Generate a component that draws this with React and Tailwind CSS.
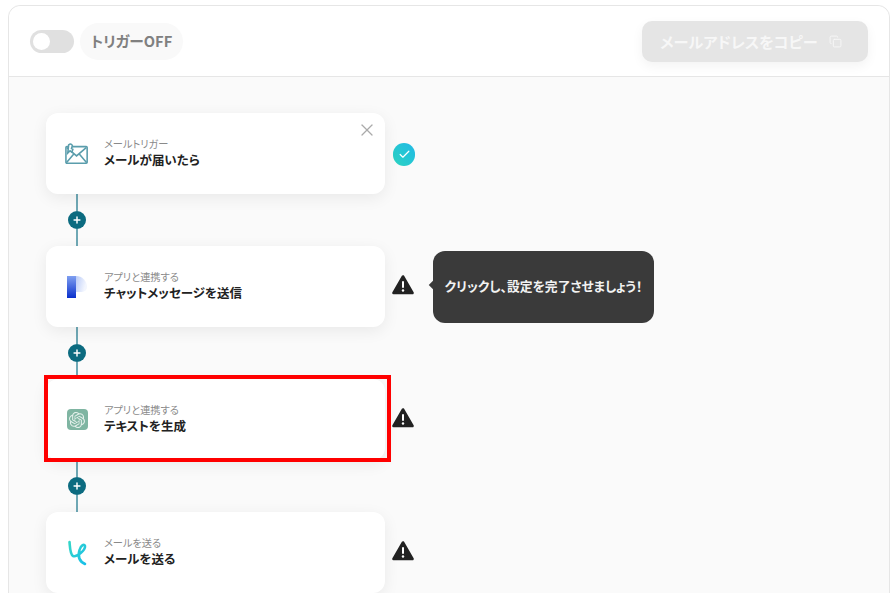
import { Copy, X, Plus, Check } from 'lucide-react'
import { SiOpenai } from 'react-icons/si'

const fontFamily = "font-['Noto_Sans_CJK_JP','Noto_Sans',sans-serif]"

function MailIcon() {
  return (
    <svg width="26" height="24" viewBox="0 0 26 24" fill="none" stroke="#5a9dac" strokeWidth="1.7">
      <rect x="1" y="4" width="23" height="18" rx="1" />
      <path d="M2 5l10.500 9L23 5M1.500 21.500l8.500-10M23.500 21.500l-8.500-10" />
      <path d="M3 11l1-9c2-1.500 3.500-.5 4 1l-1 3 1.500 1-1 3-2-1.500z" fill="#fff" />
    </svg>
  )
}

function ChatLogo() {
  return (
    <svg width="20" height="22" viewBox="0 0 20 22">
      <defs>
        <linearGradient id="chatFade" x1="0" y1="0" x2="1" y2="0.2">
          <stop offset="0" stopColor="#8fabf2" />
          <stop offset="1" stopColor="#f3f6fe" />
        </linearGradient>
        <linearGradient id="chatBar" x1="0" y1="0" x2="0" y2="1">
          <stop offset="0" stopColor="#7f9ff0" />
          <stop offset="1" stopColor="#0a30cc" />
        </linearGradient>
      </defs>
      <path d="M0 0h9a11 11 0 0 1 11 11 5 5 0 0 1-5 5H0z" fill="url(#chatFade)" />
      <path d="M0 0h9v22H0z" fill="url(#chatBar)" />
    </svg>
  )
}

function SendLogo() {
  return (
    <svg width="20" height="26" viewBox="0 0 20 26" fill="none" strokeLinecap="round">
      <defs>
        <linearGradient id="sendStroke" x1="0" y1="0" x2="1" y2="1">
          <stop offset="0" stopColor="#35d6c8" />
          <stop offset="1" stopColor="#18bfe8" />
        </linearGradient>
      </defs>
      <path
        d="M2.500 2C3 7 3 14 6 16 10 17.500 18.500 10 18 6 17.500 3.500 14 5 12.500 10 11 15 11.500 21 18 24"
        stroke="url(#sendStroke)"
        strokeWidth="2.600"
      />
    </svg>
  )
}

function WarningIcon() {
  return (
    <svg width="22" height="20" viewBox="0 0 22 20">
      <path d="M11 1.500 20.500 18H1.500z" fill="#222" stroke="#222" strokeWidth="2.600" strokeLinejoin="round" />
      <rect x="10" y="6" width="2" height="7" rx="1" fill="#fff" />
      <circle cx="11" cy="15.500" r="1.200" fill="#fff" />
    </svg>
  )
}

function Connector() {
  return (
    <div className="flex h-[52px] w-[62px] flex-col items-center">
      <div className="w-[1.5px] flex-1 bg-[#6fa8b5]" />
      <div className="flex h-[18px] w-[18px] items-center justify-center rounded-full bg-[#0c6b80]">
        <Plus size={10} strokeWidth={3.5} color="#fff" />
      </div>
      <div className="w-[1.5px] flex-1 bg-[#6fa8b5]" />
    </div>
  )
}

function StepCard({ icon, label, title, closable, highlighted, children }) {
  return (
    <div className="flex items-center">
      <div className="relative flex h-[81px] w-[339px] items-center rounded-xl bg-white pl-[19px] shadow-[0_4px_16px_rgba(0,0,0,0.07)]">
        <div className="flex w-[24px] items-center justify-center">{icon}</div>
        <div className="ml-[15px] mb-[1px] [font-feature-settings:'palt']">
          <div className="text-[10.2px] leading-[14px] text-[#8a8a8a]">{label}</div>
          <div className="text-[12.5px] leading-[18px] font-bold text-[#222]">{title}</div>
        </div>
        {closable && (
          <X size={20} strokeWidth={1.5} color="#aaa" className="absolute top-[7px] right-[8px]" />
        )}
        {highlighted && (
          <div className="absolute top-[-4px] left-[-2px] h-[87px] w-[347px] border-4 border-[#f00]" />
        )}
      </div>
      {children}
    </div>
  )
}

export default function App() {
  return (
    <div className={`h-[593px] overflow-hidden bg-white pt-[5px] pl-[8px] ${fontFamily}`}>
      <div className="h-[600px] w-[882px] rounded-t-xl border border-[#e6e6e6] bg-[#fafafa]">
        <div className="flex h-[71px] items-center justify-between rounded-t-xl border-b border-[#e6e6e6] bg-white pr-[21px] pl-[21px]">
          <div className="flex items-center gap-[6px]">
            <div className="flex h-[23px] w-[44px] items-center rounded-full bg-[#e0e0e0] pl-[3px]">
              <div className="h-[17px] w-[17px] rounded-full bg-white" />
            </div>
            <div className="flex h-[37px] w-[103px] items-center justify-center rounded-full bg-[#f9f9f9] text-[14.7px] font-bold text-[#808080] [font-feature-settings:'palt']">
              トリガーOFF
            </div>
          </div>
          <div className="flex h-[41px] w-[226px] items-center justify-center gap-[11px] rounded-[10px] bg-[#e5e5e5] pr-[8px] text-[15.2px] font-bold text-[#f7f7f7] shadow-[0_4px_12px_rgba(0,0,0,0.05)] [font-feature-settings:'palt']">
            メールアドレスをコピー
            <Copy size={13} strokeWidth={1.8} color="#f7f7f7" />
          </div>
        </div>

        <div className="pt-[36px] pl-[37px]">
          <StepCard icon={<MailIcon />} label="メールトリガー" title="メールが届いたら" closable>
            <div className="mt-[1px] ml-[8px] flex h-[23px] w-[22px] items-center justify-center rounded-full bg-gradient-to-tr from-[#2dd4bf] to-[#22b8e6]">
              <Check size={13} strokeWidth={2.2} color="#fff" />
            </div>
          </StepCard>
          <Connector />
          <StepCard icon={<ChatLogo />} label="アプリと連携する" title="チャットメッセージを送信">
            <div className="mb-[4px] ml-[7px]">
              <WarningIcon />
            </div>
            <div className="relative ml-[19px] flex h-[72px] w-[221px] items-center justify-center rounded-xl bg-[#3a3a3a] text-[12.8px] font-bold text-[#f2f2f2] [font-feature-settings:'palt']">
              <div className="absolute top-[31px] left-[-3px] h-[6px] w-[6px] rotate-45 bg-[#3a3a3a]" />
              <span className="mb-[2px]">クリックし、設定を完了させましょう！</span>
            </div>
          </StepCard>
          <Connector />
          <StepCard
            icon={
              <div className="flex h-[21px] w-[21px] items-center justify-center rounded-[4px] bg-[#7fb5a2]">
                <SiOpenai size={16} color="#e4f0eb" />
              </div>
            }
            label="アプリと連携する"
            title="テキストを生成"
            highlighted
          >
            <div className="mb-[4px] ml-[7px]">
              <WarningIcon />
            </div>
          </StepCard>
          <Connector />
          <StepCard icon={<SendLogo />} label="メールを送る" title="メールを送る">
            <div className="mb-[4px] ml-[7px]">
              <WarningIcon />
            </div>
          </StepCard>
        </div>
      </div>
    </div>
  )
}
